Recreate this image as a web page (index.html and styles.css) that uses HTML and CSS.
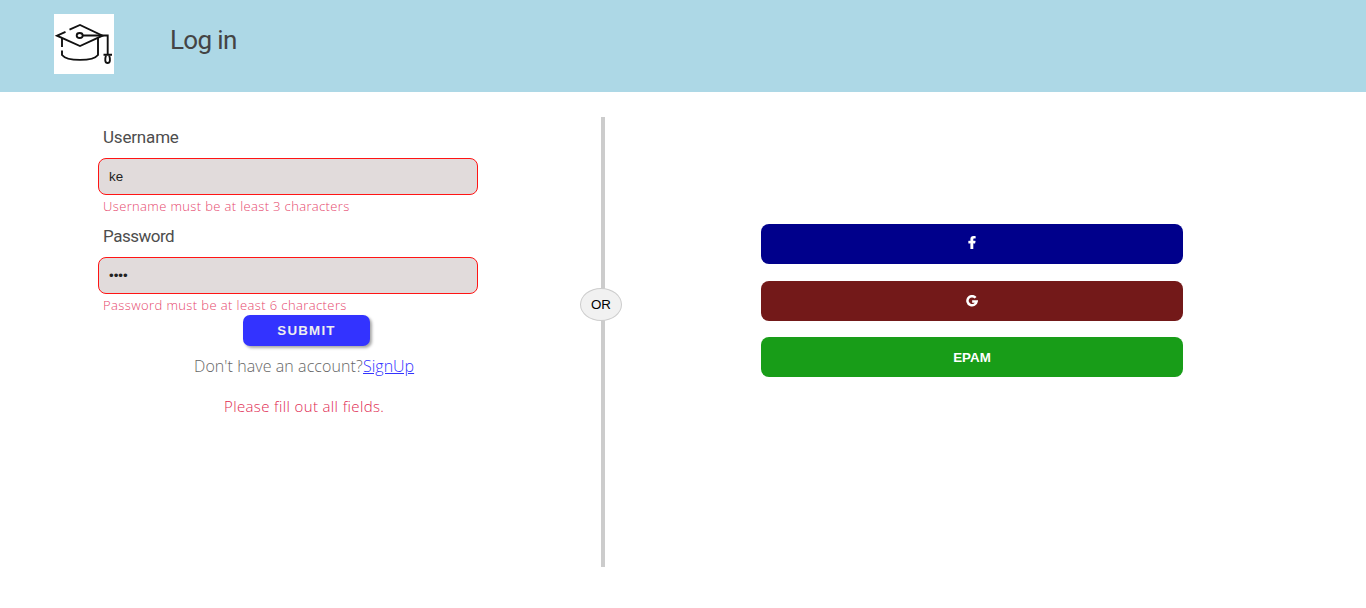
FILE: index.html
```html
<!DOCTYPE html>
<html lang="en">
<head>
<meta charset="utf-8">
<title>Log in</title>
<link rel="stylesheet" href="styles.css">
</head>
<body>
<header class="header">
  <svg class="logo" viewBox="0 0 60 60" fill="none" stroke="#111" stroke-width="1.9">
    <path d="M11.5 17.8 3 21.7 26 32 48.5 21.7 26 11 15.5 15.7"/>
    <ellipse cx="25.7" cy="21.5" rx="3" ry="2.5"/>
    <path d="M29 21.5H53.7V41M49.5 40.7H58M8 24V33M8 36.5V41C13 47.5 39 47.5 44 41V24"/>
    <path d="M52 41.5C50.8 45 50.8 49 53.6 49S56.4 45 55.2 41.5"/>
  </svg>
  <h1 class="title">Log in</h1>
</header>
<main class="content">
  <form class="form">
    <label class="label label-user" for="user">Username</label>
    <input class="input" id="user" type="text" value="ke">
    <p class="error error-user">Username must be at least 3 characters</p>
    <label class="label label-pass" for="pass">Password</label>
    <input class="input" id="pass" type="password" value="1234">
    <p class="error error-pass">Password must be at least 6 characters</p>
    <button class="submit" type="button">SUBMIT</button>
    <p class="account"><span class="question">Don't have an account?</span><a class="signup" href="#">SignUp</a></p>
    <p class="notice">Please fill out all fields.</p>
  </form>
  <div class="divider"><span class="or">OR</span></div>
  <div class="social">
    <button class="provider facebook" type="button" aria-label="Facebook"><svg width="8" height="13" viewBox="0 0 320 512" fill="#fff" stroke="#fff" stroke-width="16"><path d="M279 288l14-93h-89v-60c0-25 13-50 53-50h40V7s-37-7-72-7c-73 0-121 44-121 125v70H23v93h81v224h100V288z"/></svg></button>
    <button class="provider google" type="button" aria-label="Google"><svg width="12" height="12" viewBox="0 0 24 24" fill="none" stroke="#fff" stroke-width="5"><path d="M19.2 5.6A9.2 9.2 0 1 0 21.2 13H12.3"/></svg></button>
    <button class="provider epam" type="button">EPAM</button>
  </div>
</main>
</body>
</html>
```
FILE: styles.css
```css
* { box-sizing: border-box; }
body { margin: 0; background: #fff; font-family: "Open Sans", sans-serif; color: #666; overflow: hidden; }
p { margin: 0; white-space: nowrap; }
.header { display: flex; height: 92px; padding: 14px 54px; background: #add8e6; }
.logo { width: 60px; height: 60px; background: #fff; }
.title { margin: 8px 0 0 56px; font-family: Roboto, sans-serif; font-size: 26px; line-height: 36px; font-weight: 400; color: #444; letter-spacing: -0.65px; }
.content { display: flex; padding-top: 25px; }
.form { display: flex; flex-direction: column; width: 380px; margin-left: 98px; padding-top: 9px; }
.label { height: 32px; padding-left: 5px; font-family: Roboto, sans-serif; font-size: 17px; line-height: 22px; color: #4d4d4d; }
.label-user { letter-spacing: -0.18px; }
.label-pass { letter-spacing: -0.5px; }
.input { width: 380px; height: 37px; padding: 0 10px; border: 1px solid #ff1414; border-radius: 8px; background: #e1dbdb; font: 13.33px "Liberation Sans", Arial, sans-serif; color: #222; }
.error { height: 30px; padding: 2px 0 0 5px; font-size: 13px; font-weight: 300; line-height: 18px; letter-spacing: 0.36px; color: #e6486d; }
.error-pass { height: 21px; letter-spacing: 0.4px; }
.submit { align-self: center; width: 127px; height: 31px; margin-left: 37px; padding: 0; border: 0; border-radius: 7px; background: #3333ff; color: #eee; font: 700 13.33px "Liberation Sans", Arial, sans-serif; letter-spacing: 1.2px; box-shadow: 2px 2px 3px rgba(0,0,0,.35); }
.account { display: flex; margin: 9px 0 0 96px; font-size: 16px; line-height: 22px; font-weight: 300; }
.question { width: 169px; letter-spacing: 0.08px; }
.signup { color: #3333ff; }
.notice { margin: 19px 0 0 126px; font-size: 15px; line-height: 21px; font-weight: 300; letter-spacing: 0.37px; color: #e02850; }
.divider { position: relative; width: 4px; height: 450px; margin-left: 123px; background: #ccc; }
.or { position: absolute; left: -21px; top: 171px; width: 42px; height: 33px; border: 1px solid #ccc; border-radius: 50%; background: #f1f1f1; color: #000; font: 13.33px/31px "Liberation Sans", Arial, sans-serif; text-align: center; }
.social { display: flex; flex-direction: column; width: 422px; margin-left: 156px; padding-top: 107px; }
.provider { display: flex; align-items: center; justify-content: center; height: 40px; margin: 0 0 16px; padding: 0; border: 0; border-radius: 8px; color: #fff; font: 700 13.33px "Liberation Sans", Arial, sans-serif; }
.facebook { margin-bottom: 17px; background: #00008b; padding-bottom: 3px; }
.google { background: #731919; padding-bottom: 1px; }
.epam { background: #189d18; }
```
